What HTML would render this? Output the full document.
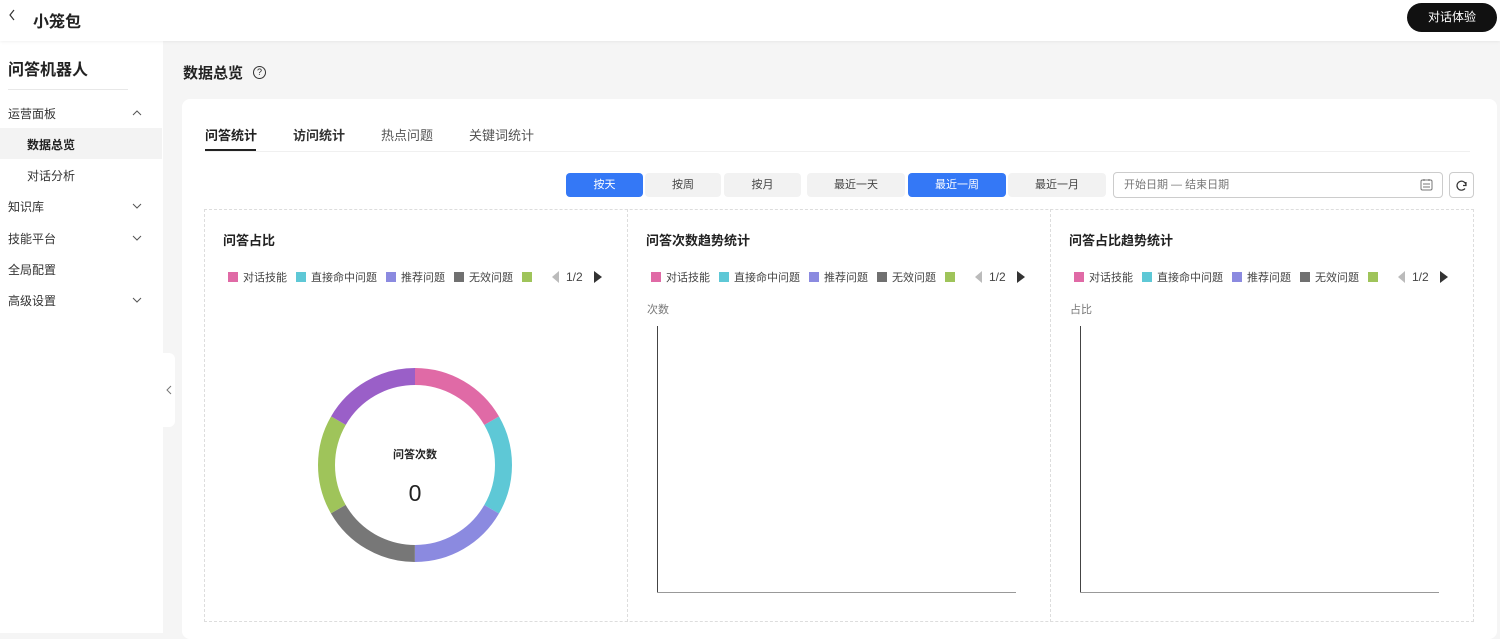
<!DOCTYPE html>
<html><head><meta charset="utf-8"><style>
*{box-sizing:border-box;margin:0;padding:0}
body{width:1500px;height:633px;overflow:hidden;background:#f5f5f5;font-family:"Liberation Sans","Noto Sans CJK SC",sans-serif;color:#222;position:relative}
.a{position:absolute;white-space:nowrap}
.hdr{left:0;top:0;width:1500px;height:41px;background:#fff;box-shadow:0 1px 3px rgba(0,0,0,.06);z-index:2}
.side{left:0;top:41px;width:163px;height:592px;background:#fff}
.mi{font-size:12px;color:#333;left:8px}
.chev{left:131px;width:12px;height:12px}
.btn{height:24px;top:173px;border-radius:4px;background:#f2f2f2;font-size:11px;color:#444;text-align:center;line-height:24px}
.btn.on{background:#3478f6;color:#fff}
.tt{font-size:13px;font-weight:bold;color:#222;top:230px}
.lg{top:270px;font-size:11px;color:#444;display:flex;align-items:center;height:14px}
.lg i{display:inline-block;width:10px;height:10px;margin-right:5px}
.lg span{margin-right:9px;display:flex;align-items:center}
.lg svg{display:block}
</style></head><body>
<div class="a hdr">
 <svg class="a" style="left:8px;top:9px" width="8" height="12"><path d="M6 1L2 6l4 5" stroke="#333" fill="none" stroke-width="1.2"/></svg>
 <div class="a" style="left:33px;top:8px;font-size:16px;font-weight:bold">小笼包</div>
 <div class="a" style="left:1407px;top:3px;width:90px;height:29px;border-radius:15px;background:#111;color:#fff;font-size:12px;text-align:center;line-height:29px">对话体验</div>
</div>
<div class="a side"></div>
<div class="a" style="left:8px;top:56px;font-size:16px;font-weight:bold">问答机器人</div>
<div class="a" style="left:8px;top:89px;width:120px;height:1px;background:#e8e8e8"></div>
<div class="a mi" style="top:105px">运营面板</div>
<svg class="a chev" style="top:107px" viewBox="0 0 12 12"><path d="M2 8l4-4 4 4" stroke="#555" fill="none"/></svg>
<div class="a" style="left:0;top:128px;width:162px;height:31px;background:#f3f3f3"></div>
<div class="a mi" style="left:27px;top:136px;font-weight:bold;color:#222">数据总览</div>
<div class="a mi" style="left:27px;top:167px">对话分析</div>
<div class="a mi" style="top:198px">知识库</div>
<svg class="a chev" style="top:200px" viewBox="0 0 12 12"><path d="M2 4l4 4 4-4" stroke="#555" fill="none"/></svg>
<div class="a mi" style="top:230px">技能平台</div>
<svg class="a chev" style="top:232px" viewBox="0 0 12 12"><path d="M2 4l4 4 4-4" stroke="#555" fill="none"/></svg>
<div class="a mi" style="top:261px">全局配置</div>
<div class="a mi" style="top:292px">高级设置</div>
<svg class="a chev" style="top:294px" viewBox="0 0 12 12"><path d="M2 4l4 4 4-4" stroke="#555" fill="none"/></svg>
<div class="a" style="left:163px;top:353px;width:12px;height:74px;background:#fff;border-radius:0 6px 6px 0"></div>
<svg class="a" style="left:166px;top:385px" width="6" height="10"><path d="M5 1L1 5l4 4" stroke="#777" fill="none"/></svg>

<div class="a" style="left:183px;top:62px;font-size:15px;font-weight:bold">数据总览</div>
<div class="a" style="left:253px;top:66px;width:13px;height:13px;border:1px solid #333;border-radius:50%;font-size:9px;text-align:center;line-height:11px">?</div>

<div class="a" style="left:182px;top:99px;width:1315px;height:540px;background:#fff;border-radius:8px"></div>
<div class="a" style="left:205px;top:125px;font-size:13px;font-weight:bold">问答统计</div>
<div class="a" style="left:293px;top:125px;font-size:13px;font-weight:bold;color:#333">访问统计</div>
<div class="a" style="left:381px;top:125px;font-size:13px;color:#555">热点问题</div>
<div class="a" style="left:469px;top:125px;font-size:13px;color:#555">关键词统计</div>
<div class="a" style="left:205px;top:151px;width:1265px;height:1px;background:#f0f0f0"></div>
<div class="a" style="left:205px;top:149px;width:51px;height:2px;background:#222"></div>

<div class="a btn on" style="left:566px;width:77px">按天</div>
<div class="a btn" style="left:645px;width:76px">按周</div>
<div class="a btn" style="left:724px;width:77px">按月</div>
<div class="a btn" style="left:807px;width:98px">最近一天</div>
<div class="a btn on" style="left:908px;width:98px">最近一周</div>
<div class="a btn" style="left:1008px;width:98px">最近一月</div>
<div class="a" style="left:1113px;top:172px;width:330px;height:26px;border:1px solid #ccc;border-radius:4px;font-size:11px;color:#777;line-height:24px;padding-left:10px">开始日期 — 结束日期</div>
<svg class="a" style="left:1420px;top:178px" width="13" height="13"><rect x="1" y="2" width="11" height="10" rx="1.5" stroke="#777" fill="none"/><path d="M4 1v2M9 1v2M3 6h7M3 9h7" stroke="#777"/></svg>
<div class="a" style="left:1449px;top:172px;width:25px;height:26px;border:1px solid #ccc;border-radius:4px"></div>
<svg class="a" style="left:1455px;top:179px" width="13" height="13"><path d="M10 9.5A4.5 4.5 0 1 1 11 6.5M11 3v3.5H8" stroke="#333" fill="none" stroke-width="1.2"/></svg>

<div class="a" style="left:204px;top:209px;width:1270px;height:413px;border:1px dashed #ddd"></div>
<div class="a" style="left:627px;top:209px;width:0;height:413px;border-left:1px dashed #ddd"></div>
<div class="a" style="left:1050px;top:209px;width:0;height:413px;border-left:1px dashed #ddd"></div>

<div class="a tt" style="left:223px">问答占比</div>
<div class="a tt" style="left:646px">问答次数趋势统计</div>
<div class="a tt" style="left:1069px">问答占比趋势统计</div>

<div class="a lg" style="left:228px"><span><i style="background:#e06aa6"></i>对话技能</span><span><i style="background:#5ec8d6"></i>直接命中问题</span><span><i style="background:#8b8ae0"></i>推荐问题</span><span><i style="background:#707070"></i>无效问题</span><span style="margin-right:14px"><i style="background:#9fc45a"></i></span><svg width="8" height="12"><path d="M8 0v12L1 6z" fill="#bbb"/></svg><span style="margin:0 0 0 7px;font-size:12px">1/2</span><svg width="8" height="12" style="margin-left:11px"><path d="M0 0v12l8-6z" fill="#333"/></svg></div>
<div class="a lg" style="left:651px"><span><i style="background:#e06aa6"></i>对话技能</span><span><i style="background:#5ec8d6"></i>直接命中问题</span><span><i style="background:#8b8ae0"></i>推荐问题</span><span><i style="background:#707070"></i>无效问题</span><span style="margin-right:14px"><i style="background:#9fc45a"></i></span><svg width="8" height="12"><path d="M8 0v12L1 6z" fill="#bbb"/></svg><span style="margin:0 0 0 7px;font-size:12px">1/2</span><svg width="8" height="12" style="margin-left:11px"><path d="M0 0v12l8-6z" fill="#333"/></svg></div>
<div class="a lg" style="left:1074px"><span><i style="background:#e06aa6"></i>对话技能</span><span><i style="background:#5ec8d6"></i>直接命中问题</span><span><i style="background:#8b8ae0"></i>推荐问题</span><span><i style="background:#707070"></i>无效问题</span><span style="margin-right:14px"><i style="background:#9fc45a"></i></span><svg width="8" height="12"><path d="M8 0v12L1 6z" fill="#bbb"/></svg><span style="margin:0 0 0 7px;font-size:12px">1/2</span><svg width="8" height="12" style="margin-left:11px"><path d="M0 0v12l8-6z" fill="#333"/></svg></div>

<svg class="a" style="left:315px;top:365px" width="200" height="200" viewBox="-100 -100 200 200">
<g transform="rotate(-90)" fill="none" stroke-width="17">
<circle r="88.5" stroke="#e06aa6" stroke-dasharray="92.68 1000" stroke-dashoffset="0"/>
<circle r="88.5" stroke="#5ec8d6" stroke-dasharray="92.68 1000" stroke-dashoffset="-92.68"/>
<circle r="88.5" stroke="#8b8ae0" stroke-dasharray="92.68 1000" stroke-dashoffset="-185.36"/>
<circle r="88.5" stroke="#777" stroke-dasharray="92.68 1000" stroke-dashoffset="-278.04"/>
<circle r="88.5" stroke="#9fc45a" stroke-dasharray="92.68 1000" stroke-dashoffset="-370.72"/>
<circle r="88.5" stroke="#9a5fc8" stroke-dasharray="92.69 1000" stroke-dashoffset="-463.4"/>
</g></svg>
<div class="a" style="left:365px;top:446px;width:100px;text-align:center;font-size:11px;font-weight:bold">问答次数</div>
<div class="a" style="left:365px;top:480px;width:100px;text-align:center;font-size:23px">0</div>

<div class="a" style="left:647px;top:301px;font-size:11px;color:#777">次数</div>
<div class="a" style="left:657px;top:326px;width:1px;height:267px;background:#444"></div>
<div class="a" style="left:657px;top:592px;width:359px;height:1px;background:#999"></div>
<div class="a" style="left:1070px;top:301px;font-size:11px;color:#777">占比</div>
<div class="a" style="left:1080px;top:326px;width:1px;height:267px;background:#444"></div>
<div class="a" style="left:1080px;top:592px;width:359px;height:1px;background:#999"></div>
</body></html>
